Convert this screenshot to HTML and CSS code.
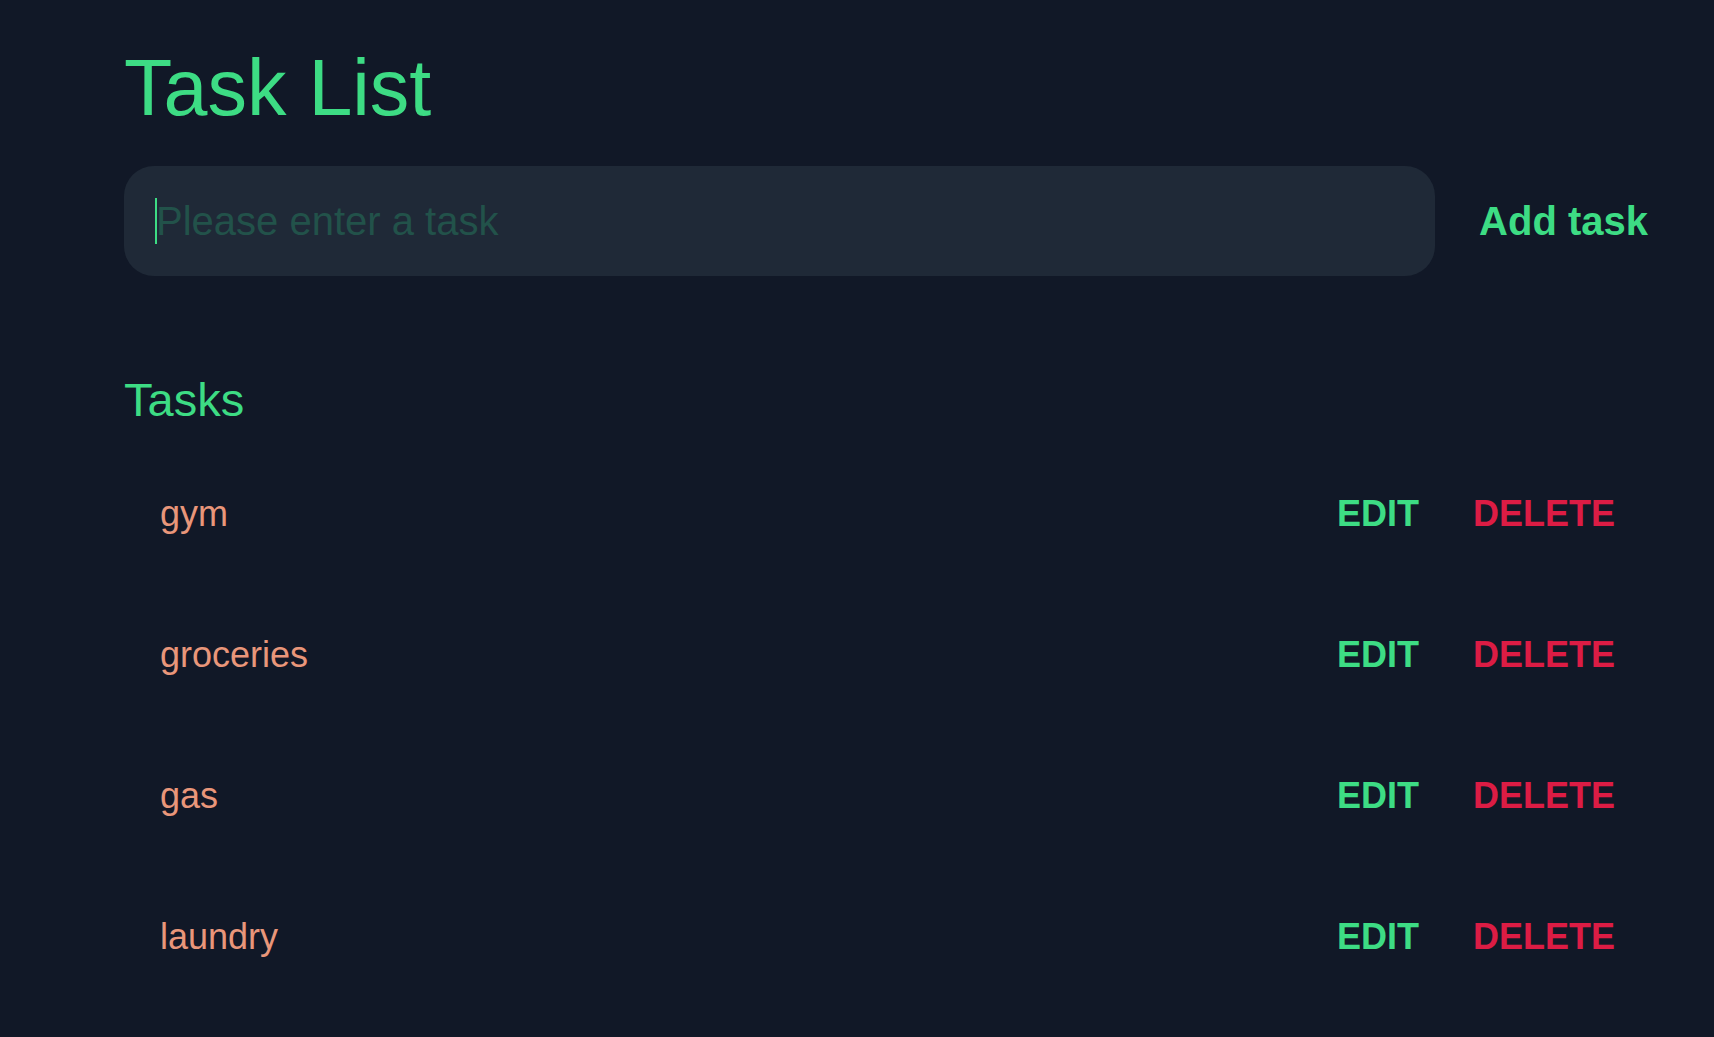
FILE: index.html
```html
<!DOCTYPE html>
<html lang="en">
<head>
<meta charset="utf-8">
<title>Task List</title>
<link rel="stylesheet" href="styles.css">
</head>
<body>
<main class="app">
  <h1 class="title">Task List</h1>
  <form class="add-form" onsubmit="return false">
    <label class="field">
      <input class="task-input" type="text" placeholder="Please enter a task">
    </label>
    <button class="add-btn" type="submit">Add task</button>
  </form>
  <h2 class="section-title">Tasks</h2>
  <ul class="task-list">
    <li class="task"><span class="task-name">gym</span><div class="actions"><button class="btn-edit">EDIT</button><button class="btn-delete">DELETE</button></div></li>
    <li class="task"><span class="task-name">groceries</span><div class="actions"><button class="btn-edit">EDIT</button><button class="btn-delete">DELETE</button></div></li>
    <li class="task"><span class="task-name">gas</span><div class="actions"><button class="btn-edit">EDIT</button><button class="btn-delete">DELETE</button></div></li>
    <li class="task"><span class="task-name">laundry</span><div class="actions"><button class="btn-edit">EDIT</button><button class="btn-delete">DELETE</button></div></li>
  </ul>
</main>
</body>
</html>
```

FILE: styles.css
```css
* { box-sizing: border-box; }

html, body {
  margin: 0;
  padding: 0;
  background: #111827;
  height: 100%;
}

body {
  font-family: "Liberation Sans", Arial, Helvetica, sans-serif;
  color: #3ddc84;
}

.app {
  width: 1527px;
  margin-left: 124px;
  padding-top: 48px;
}

.title {
  margin: 0;
  font-size: 79px;
  line-height: 80px;
  font-weight: 400;
  color: #3ddc84;
}

.add-form {
  margin-top: 38px;
  display: flex;
  align-items: center;
  gap: 44px;
}

.field {
  position: relative;
  flex: 1;
  display: block;
}

.field::before {
  content: "";
  position: absolute;
  left: 31px;
  top: 32px;
  width: 2px;
  height: 46px;
  background: #3ddc84;
}

.task-input {
  display: block;
  width: 100%;
  height: 110px;
  border: none;
  outline: none;
  border-radius: 30px;
  background: #1f2937;
  padding: 0 32px;
  font-family: "Liberation Sans", Arial, Helvetica, sans-serif;
  font-size: 40px;
  color: #3ddc84;
}

.task-input::placeholder {
  color: #22524a;
  opacity: 1;
}

.add-btn {
  background: none;
  border: none;
  padding: 0 3px 0 0;
  font-family: "Liberation Sans", Arial, Helvetica, sans-serif;
  font-size: 40px;
  font-weight: 700;
  color: #3ddc84;
  cursor: pointer;
}

.section-title {
  margin: 100px 0 0;
  font-size: 47px;
  line-height: 48px;
  font-weight: 400;
  color: #3ddc84;
}

.task-list {
  list-style: none;
  margin: 19px 0 0;
  padding: 0;
}

.task {
  height: 141px;
  display: flex;
  align-items: center;
  justify-content: space-between;
  padding: 0 36px 0 36px;
}

.task-name {
  font-size: 36px;
  line-height: 36px;
  color: #e9967a;
}

.actions {
  display: flex;
  gap: 54px;
}

.actions button {
  background: none;
  border: none;
  padding: 0;
  font-family: "Liberation Sans", Arial, Helvetica, sans-serif;
  font-size: 36px;
  line-height: 36px;
  font-weight: 700;
  cursor: pointer;
}

.btn-edit { color: #3ddc84; }
.btn-delete { color: #dc1c44; }
```
